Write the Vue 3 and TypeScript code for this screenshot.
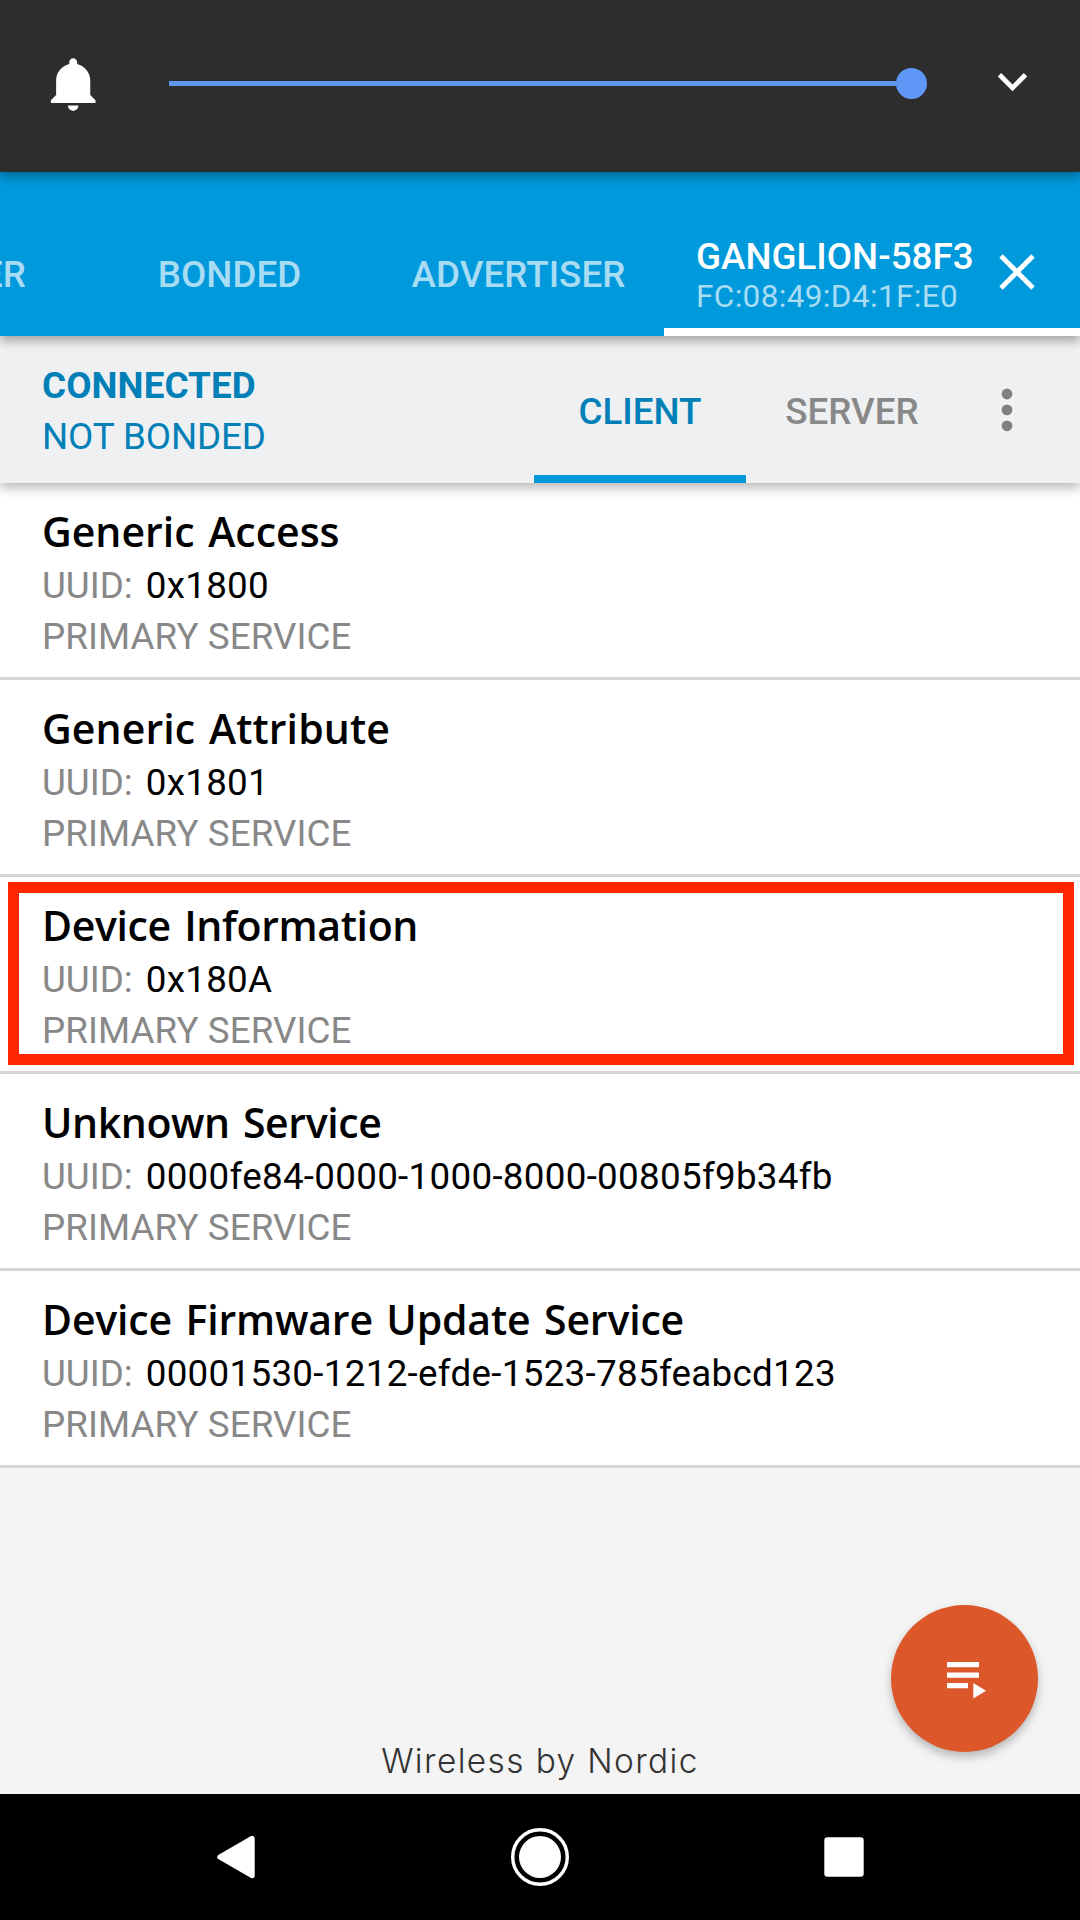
<script setup lang="ts">
interface Service {
  name: string
  uuid: string
  spacing: number
  marked?: boolean
}

const tabs: string[] = ['SCANNER', 'BONDED', 'ADVERTISER']

const services: Service[] = [
  { name: 'Generic Access', uuid: '0x1800', spacing: 0 },
  { name: 'Generic Attribute', uuid: '0x1801', spacing: 0.1 },
  { name: 'Device Information', uuid: '0x180A', spacing: -0.35, marked: true },
  { name: 'Unknown Service', uuid: '0000fe84-0000-1000-8000-00805f9b34fb', spacing: -0.4 },
  { name: 'Device Firmware Update Service', uuid: '00001530-1212-efde-1523-785feabcd123', spacing: -0.16 },
]
</script>

<template>
  <div class="screen">
    <section class="volume">
      <svg class="bell" viewBox="0 0 24 24">
        <path fill="#fff" d="M11.5 22c1.1 0 2-.9 2-2h-4c0 1.1.9 2 2 2zm6.5-6v-5.5c0-3.07-2.13-5.64-5-6.32V3.5c0-.83-.67-1.5-1.5-1.5S10 2.67 10 3.5v.68c-2.87.68-5 3.25-5 6.32V16l-2 2v1h17v-1l-2-2z" />
      </svg>
      <div class="slider">
        <span class="track"></span>
        <span class="thumb"></span>
      </div>
      <svg class="chevron" viewBox="0 0 24 24">
        <path fill="#fff" d="M16.59 8.59L12 13.17 7.41 8.59 6 10l6 6 6-6z" />
      </svg>
    </section>

    <header class="appbar">
      <div class="tabs">
        <div v-for="tab in tabs" :key="tab" class="tab">{{ tab }}</div>
        <div class="device">
          <div class="device-text">
            <div class="device-name">GANGLION-58F3</div>
            <div class="device-address">FC:08:49:D4:1F:E0</div>
          </div>
          <svg class="close" viewBox="0 0 36 36">
            <path d="M2 2L34 34M34 2L2 34" stroke="#fff" stroke-width="4.8" />
          </svg>
        </div>
      </div>
    </header>

    <section class="status">
      <div class="state">
        <div class="connected">CONNECTED</div>
        <div class="bond">NOT BONDED</div>
      </div>
      <div class="mode active">CLIENT</div>
      <div class="mode server">SERVER</div>
      <svg class="more" viewBox="0 0 12 44">
        <circle cx="6" cy="6" r="5.4" />
        <circle cx="6" cy="21.9" r="5.4" />
        <circle cx="6" cy="37.8" r="5.4" />
      </svg>
    </section>

    <main class="list">
      <article v-for="service in services" :key="service.uuid" class="row">
        <h2 :style="{ letterSpacing: service.spacing + 'px' }">{{ service.name }}</h2>
        <p><span class="label">UUID:</span><span class="uuid">{{ service.uuid }}</span></p>
        <p class="label kind">PRIMARY SERVICE</p>
        <span v-if="service.marked" class="marker"></span>
      </article>
    </main>

    <footer class="footer">
      <span class="brand">Wireless by Nordic</span>
      <button class="fab">
        <svg viewBox="0 0 40 36">
          <path fill="#fff" d="M0 0h32v5.3H0zM0 10.4h32v5.3H0zM0 21h21v5.2H0zM26.3 21v15.6L39 28.8z" />
        </svg>
      </button>
    </footer>

    <nav class="navbar">
      <svg viewBox="0 0 1080 126">
        <path d="M220 63L252 44.500V81.500Z" fill="#fff" stroke="#fff" stroke-width="5.400" stroke-linejoin="round" />
        <circle cx="540" cy="63" r="27.300" fill="none" stroke="#fff" stroke-width="3.400" />
        <circle cx="540" cy="63" r="21" fill="#fff" />
        <rect x="824.300" y="43.200" width="39.400" height="39.600" rx="3" fill="#fff" />
      </svg>
    </nav>
  </div>
</template>

<style>
body {
  margin: 0;
}
</style>

<style scoped>
.screen {
  width: 1080px;
  height: 1920px;
  display: flex;
  flex-direction: column;
  overflow: hidden;
  background: #f4f4f4;
  font-family: Roboto, sans-serif;
  font-size: 36.75px;
  line-height: 51px;
  white-space: nowrap;
}

.volume {
  position: relative;
  z-index: 3;
  height: 172px;
  flex: none;
  display: flex;
  align-items: flex-start;
  background: #2d2d2d;
  box-shadow: 0 5px 10px rgba(0, 0, 0, 0.32);
}

.bell {
  width: 63px;
  height: 63px;
  margin: 53px 0 0 43px;
}

.slider {
  width: 758px;
  height: 32px;
  margin: 67.500px 0 0 63px;
  display: flex;
  align-items: center;
}

.track {
  flex: 1;
  height: 5px;
  background: #5e97f6;
}

.thumb {
  width: 31.500px;
  height: 31.500px;
  margin-left: -1px;
  border-radius: 50%;
  background: #5e97f6;
}

.chevron {
  width: 59px;
  height: 59px;
  margin: 51.500px 0 0 55.800px;
}

.appbar {
  position: relative;
  z-index: 2;
  height: 164px;
  flex: none;
  box-sizing: border-box;
  padding-top: 40px;
  background: #0099dc;
  box-shadow: 0 5px 10px rgba(0, 0, 0, 0.32);
}

.tabs {
  height: 124px;
  display: flex;
  overflow: hidden;
}

.tab {
  width: 287px;
  flex: none;
  line-height: 125px;
  text-align: center;
  font-weight: 500;
  letter-spacing: 0.05px;
  color: #a8dcf3;
}

.tab:first-child {
  margin-left: -201px;
}

.tab:nth-child(3) {
  width: 291px;
}

.device {
  width: 416px;
  flex: none;
  box-sizing: border-box;
  height: 124px;
  padding: 25px 0 0 32px;
  display: flex;
  align-items: flex-start;
  border-bottom: 8px solid #fff;
}

.device-text {
  width: 303px;
  line-height: 40px;
}

.device-name {
  color: #fff;
  font-weight: 500;
}

.device-address {
  color: #a8dcf3;
  font-size: 31.500px;
  letter-spacing: 0.36px;
}

.close {
  width: 36px;
  height: 36px;
  margin-top: 17.300px;
}

.status {
  position: relative;
  z-index: 1;
  height: 147px;
  flex: none;
  display: flex;
  background: #eff0f2;
  box-shadow: 0 5px 10px rgba(0, 0, 0, 0.28);
}

.state {
  width: 492px;
  padding: 24px 0 0 42px;
  color: #0080b7;
}

.connected {
  font-weight: 700;
  letter-spacing: 0.1px;
}

.bond {
  letter-spacing: -0.1px;
}

.mode {
  width: 212px;
  height: 147px;
  box-sizing: border-box;
  line-height: 151px;
  text-align: center;
  font-weight: 500;
  color: #888;
}

.mode.active {
  color: #0080b7;
  border-bottom: 8px solid #0099dc;
}

.more {
  width: 12px;
  height: 44px;
  margin: 51.600px 0 0 42.500px;
  fill: #808080;
}

.row {
  position: relative;
  height: 197px;
  box-sizing: border-box;
  padding: 23px 0 0 42px;
  background: #fff;
  border-bottom: 3px solid #d6d6d6;
}

.row h2 {
  margin: 0 0 4px;
  font: 600 41px/50px "Trebuchet MS", "Open Sans", sans-serif;
  word-spacing: 3px;
  color: #000;
}

.row p {
  margin: 0;
}

.label {
  color: #888;
}

.kind {
  letter-spacing: 0.08px;
}

.uuid {
  margin-left: 13px;
  letter-spacing: 0.3px;
  color: #000;
}

.marker {
  position: absolute;
  left: 8px;
  top: 5px;
  width: 1066px;
  height: 183px;
  box-sizing: border-box;
  border: 11px solid #ff2600;
}

.footer {
  position: relative;
  flex: 1;
  display: flex;
  align-items: flex-end;
  justify-content: center;
}

.brand {
  font: 300 33.400px/50px Inter, sans-serif;
  letter-spacing: 1.4px;
  color: #333;
  margin-bottom: 8px;
}

.fab {
  position: absolute;
  right: 42px;
  bottom: 42px;
  width: 147px;
  height: 147px;
  padding: 0;
  border: 0;
  border-radius: 50%;
  background: #dc582a;
  box-shadow: 0 5px 10px rgba(0, 0, 0, 0.25);
}

.fab svg {
  display: block;
  width: 40px;
  height: 36px;
  margin: 3px 0 0 56px;
  overflow: visible;
}

.navbar {
  height: 126px;
  flex: none;
  background: #000;
}

.navbar svg {
  display: block;
  width: 1080px;
  height: 126px;
}
</style>
